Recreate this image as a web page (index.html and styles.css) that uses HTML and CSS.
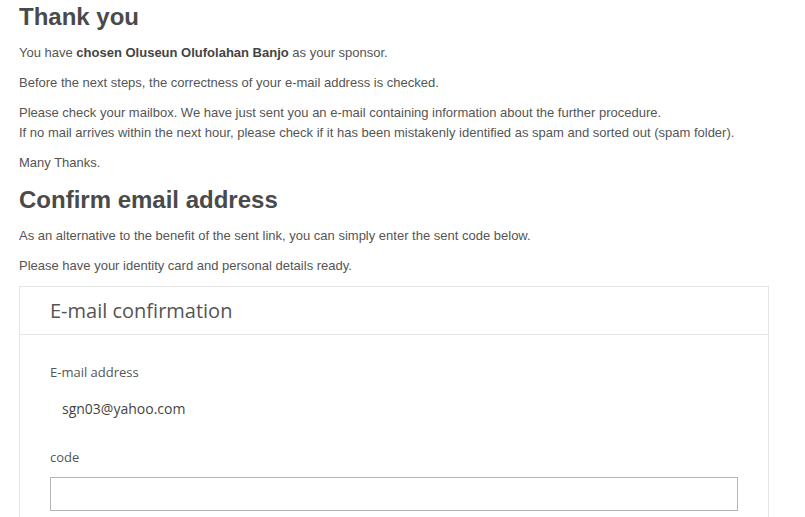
FILE: index.html
```html
<!DOCTYPE html>
<html lang="en">
<head>
    <meta charset="UTF-8">
    <meta name="viewport" content="width=device-width, initial-scale=1.0">
    <title>Thank you</title>
    <link rel="stylesheet" href="styles.css">
</head>
<body>
    <div class="page">
        <h1>Thank you</h1>
        <p>You have <strong>chosen Oluseun Olufolahan Banjo</strong> as your sponsor.</p>
        <p>Before the next steps, the correctness of your e-mail address is checked.</p>
        <p>Please check your mailbox. We have just sent you an e-mail containing information about the further procedure.<br>
        If no mail arrives within the next hour, please check if it has been mistakenly identified as spam and sorted out (spam folder).</p>
        <p>Many Thanks.</p>

        <h2>Confirm email address</h2>
        <p>As an alternative to the benefit of the sent link, you can simply enter the sent code below.</p>
        <p>Please have your identity card and personal details ready.</p>

        <div class="card">
            <div class="card-header">E-mail confirmation</div>
            <div class="card-body">
                <div class="field">
                    <label class="field-label">E-mail address</label>
                    <div class="field-value">sgn03@yahoo.com</div>
                </div>
                <div class="field">
                    <label class="field-label" for="code">code</label>
                    <input type="text" id="code" class="field-input">
                </div>
            </div>
        </div>
    </div>
</body>
</html>
```

FILE: styles.css
```css
html, body {
    overflow: hidden;
}

body {
    font-family: "Liberation Sans", Arial, sans-serif;
    font-size: 13px;
    line-height: 20px;
    color: #555555;
    background-color: #ffffff;
    margin: 0;
    padding: 0;
}

.page {
    padding: 4px 36px 0 19px;
}

h1, h2 {
    font-size: 24px;
    line-height: 26px;
    font-weight: bold;
    color: #4a4a4a;
    margin: 0 0 13px 0;
}

h2 {
    margin-top: 14px;
}

p {
    margin: 0 0 10px 0;
}

strong {
    color: #444444;
}

.card {
    margin-top: 10px;
    width: 748px;
    border: 1px solid #e6e6e6;
}

.card-header {
    font-family: "Open Sans", sans-serif;
    font-size: 20px;
    line-height: 28px;
    color: #555555;
    padding: 10px 30px 9px 30px;
    border-bottom: 1px solid #e6e6e6;
}

.card-body {
    font-family: "Open Sans", sans-serif;
    padding: 28px 30px 30px 30px;
}

.field-label {
    display: block;
    font-size: 13px;
    line-height: 18px;
    color: #555555;
}

.field-value {
    font-size: 14px;
    line-height: 20px;
    color: #444444;
    padding-left: 12px;
    margin: 18px 0 29px 0;
}

.field-input {
    display: block;
    box-sizing: border-box;
    width: 688px;
    height: 34px;
    margin-top: 11px;
    border: 1px solid #b5b5b5;
    border-radius: 0;
    padding: 6px 10px;
    font-family: "Open Sans", sans-serif;
    font-size: 14px;
}
```
